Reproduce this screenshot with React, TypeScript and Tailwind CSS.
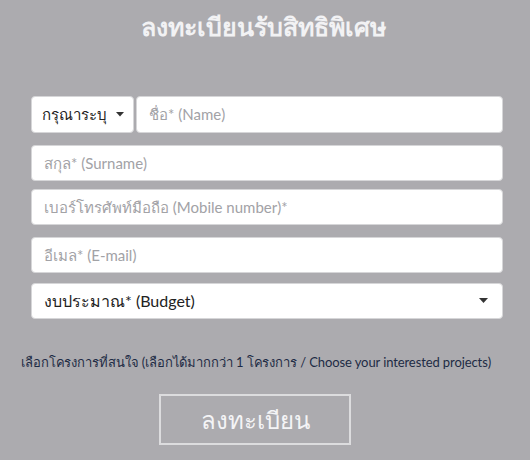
import React from "react";

const font = { fontFamily: 'Lato, "Noto Sans", "DejaVu Sans", sans-serif' };

function Caret({ w = 9 }: { w?: number }) {
  return (
    <svg width={w} height={w / 2 + 1} viewBox="0 0 10 6" className="shrink-0">
      <path d="M0 0 L10 0 L5 5.5 Z" fill="#333" />
    </svg>
  );
}

function Field({ text, cls }: { text: string; cls: string }) {
  return (
    <div className={`h-[36px] bg-white border border-[#d6d6d8] rounded-[4px] flex items-center px-[12px] text-[15px] text-[#a2a2a6] ${cls}`}>
      {text}
    </div>
  );
}

export default function App() {
  return (
    <div className="w-[530px] h-[460px] bg-[#acabaf] overflow-hidden" style={font}>
      <div className="pt-[8px] text-center text-[25px] font-bold text-[#f2f2f4] leading-[36px] pr-[4px]">
        ลงทะเบียนรับสิทธิพิเศษ
      </div>
      <div className="ml-[31px] w-[472px] mt-[52px] flex flex-col">
        <div className="flex gap-[2px]">
          <div className="w-[103px] h-[37px] bg-white border border-[#d6d6d8] rounded-[4px] flex items-center justify-center gap-[9px] text-[15px] text-[#222]">
            <span>กรุณาระบุ</span>
            <Caret w={8} />
          </div>
          <div className="flex-1">
            <div className="h-[37px] bg-white border border-[#d6d6d8] rounded-[4px] flex items-center px-[12px] text-[15px] text-[#a2a2a6]">
              ชื่อ* (Name)
            </div>
          </div>
        </div>
        <Field cls="mt-[12px]" text="สกุล* (Surname)" />
        <Field cls="mt-[8px]" text="เบอร์โทรศัพท์มือถือ (Mobile number)*" />
        <Field cls="mt-[12px]" text="อีเมล* (E-mail)" />
        <div className="mt-[10px] h-[36px] bg-white border border-[#d6d6d8] rounded-[4px] flex items-center justify-between pl-[12px] pr-[14px] text-[16px] text-[#222]">
          <span>งบประมาณ* (Budget)</span>
          <Caret w={9} />
        </div>
      </div>
      <div className="ml-[21px] mt-[33px] text-[13px] text-[#1e2b45] leading-[20px] whitespace-nowrap tracking-[-0.1px]">
        เลือกโครงการที่สนใจ (เลือกได้มากกว่า 1 โครงการ / Choose your interested projects)
      </div>
      <div className="ml-[159px] mt-[22px] w-[192px] h-[51px] border-2 border-[#dcdcde] flex items-center justify-center text-[24px] text-[#f4f4f6]">
        ลงทะเบียน
      </div>
    </div>
  );
}
